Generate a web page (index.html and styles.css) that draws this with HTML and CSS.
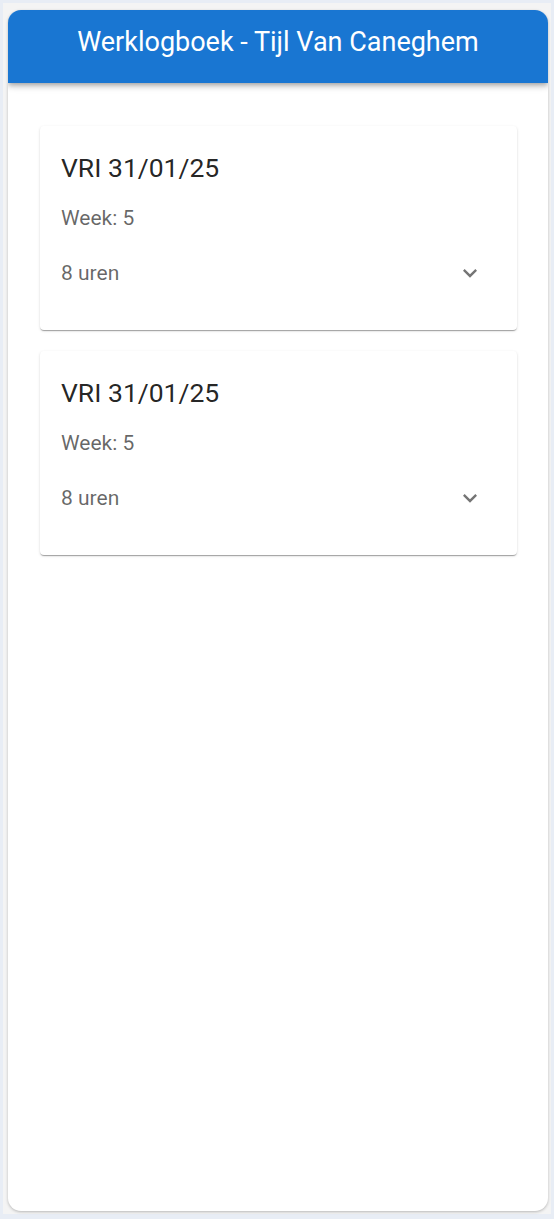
FILE: index.html
```html
<!DOCTYPE html>
<html>
<head>
<meta charset="utf-8">
<link rel="stylesheet" href="styles.css">
</head>
<body>
<div class="frame">
  <div class="app">
    <header class="appbar"><h1 class="appbar-title">Werklogboek - Tijl Van Caneghem</h1></header>
    <main class="list">
      <section class="card">
        <h2 class="card-title">VRI 31/01/25</h2>
        <p class="card-week">Week: 5</p>
        <div class="card-row">
          <span class="card-hours">8 uren</span>
          <button class="expand" aria-label="uitklappen">
            <svg viewBox="0 0 24 24" width="28" height="28"><path d="M16.59 8.59 12 13.17 7.41 8.59 6 10l6 6 6-6z" fill="currentColor"/></svg>
          </button>
        </div>
      </section>
      <section class="card">
        <h2 class="card-title">VRI 31/01/25</h2>
        <p class="card-week">Week: 5</p>
        <div class="card-row">
          <span class="card-hours">8 uren</span>
          <button class="expand" aria-label="uitklappen">
            <svg viewBox="0 0 24 24" width="28" height="28"><path d="M16.59 8.59 12 13.17 7.41 8.59 6 10l6 6 6-6z" fill="currentColor"/></svg>
          </button>
        </div>
      </section>
    </main>
  </div>
</div>
</body>
</html>
```

FILE: styles.css
```css
* { box-sizing: border-box; }
html, body { margin: 0; padding: 0; }
body {
  background: #e8edf5;
  font-family: Roboto, "Liberation Sans", sans-serif;
  height: 1219px;
  padding: 3px;
}
.frame {
  background: #f4f4f4;
  height: 1211px;
  padding: 7px 3px 2px 5px;
}
.app {
  background: #fff;
  height: 1201px;
  border-radius: 13px;
  box-shadow: 0 1px 3px rgba(0,0,0,0.25);
  overflow: hidden;
  display: flex;
  flex-direction: column;
}
.appbar {
  background: #1976d2;
  height: 73px;
  display: flex;
  align-items: center;
  justify-content: center;
  box-shadow: 0 2px 4px -1px rgba(0,0,0,0.2), 0 4px 5px 0 rgba(0,0,0,0.14), 0 1px 10px 0 rgba(0,0,0,0.12);
  position: relative;
  z-index: 1;
}
.appbar-title {
  margin: 0;
  color: #fff;
  font-weight: 400;
  font-size: 27px;
  line-height: 32px;
  padding-bottom: 10px;
}
.list {
  padding: 43px 31px 0 32px;
  display: flex;
  flex-direction: column;
  gap: 21px;
}
.card {
  height: 204px;
  border-radius: 4px;
  background: #fff;
  box-shadow: 0 2px 1px -1px rgba(0,0,0,0.2), 0 1px 1px 0 rgba(0,0,0,0.14), 0 1px 3px 0 rgba(0,0,0,0.12);
  padding: 26px 21px 0 21px;
}
.card-title {
  margin: 0;
  font-weight: 400;
  font-size: 26.5px;
  line-height: 32px;
  color: rgba(0,0,0,0.87);
}
.card-week {
  margin: 20px 0 0;
  font-size: 21px;
  line-height: 28px;
  color: rgba(0,0,0,0.6);
}
.card-row {
  margin-top: 19px;
  display: flex;
  align-items: center;
  justify-content: space-between;
  height: 44px;
}
.card-hours {
  font-size: 21px;
  color: rgba(0,0,0,0.6);
}
.expand {
  border: 0;
  background: none;
  padding: 8px;
  margin-right: 4px;
  color: #757575;
  display: flex;
}
```
